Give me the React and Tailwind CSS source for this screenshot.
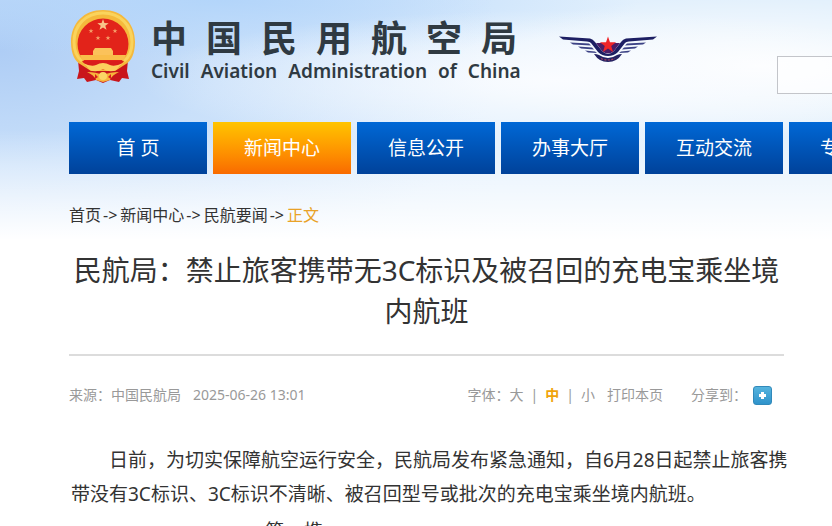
import React, { useState } from 'react'

const navItems = ['首 页', '新闻中心', '信息公开', '办事大厅', '互动交流', '专题专栏'];
const crumbs = ['首页', '新闻中心', '民航要闻'];
const sizes = ['大', '中', '小'];

const Star = ({ cx, cy, r, fill }) => {
    const points = Array.from({ length: 10 }, (_, i) => {
        const radius = i % 2 ? r * 0.4 : r;
        const angle = (Math.PI / 5) * i - Math.PI / 2;
        return `${cx + radius * Math.cos(angle)},${cy + radius * Math.sin(angle)}`;
    }).join(' ');
    return <polygon points={points} fill={fill} />;
};

const Emblem = () => (
    <svg className="w-[68px] h-[74px] shrink-0" viewBox="0 0 68 74" aria-hidden="true">
        <path d="M9 50 L22 54 H46 L59 50 L58 61 L60 69 L53 68 L50 72 L41 70 L34 73 L27 70 L18 72 L15 68 L8 69 L10 61 Z" fill="#c9151b" />
        <path d="M34 0 C53 0 66 13 66 32 C66 44 62 51 57 54 L46 61 H22 L11 54 C6 51 2 44 2 32 C2 13 15 0 34 0 Z" fill="#f5b93c" />
        <path d="M34 3 C51 3 63 15 63 32 C63 42 59 48 55 51" fill="none" stroke="#fad35c" strokeWidth="3" />
        <path d="M34 3 C17 3 5 15 5 32 C5 42 9 48 13 51" fill="none" stroke="#fad35c" strokeWidth="3" />
        <circle cx="34" cy="34" r="25.5" fill="#e2231a" />
        <Star cx={34} cy={15} r={6} fill="#f8c68a" />
        <Star cx={22} cy={21} r={2.6} fill="#f6a06a" />
        <Star cx={46} cy={21} r={2.6} fill="#f6a06a" />
        <Star cx={29} cy={28} r={2.6} fill="#f6a06a" />
        <Star cx={39} cy={28} r={2.6} fill="#f6a06a" />
        <path d="M26 38 H42 L44 41 V43 H24 V41 Z M24 43 H44 V46 H24 Z" fill="#fbc25a" />
        <path d="M11 45 H57 L55 50 H13 Z" fill="#f9bd4a" />
        <path d="M13 51 H55 L50 57 Q44 60 40 57 L34 54 L28 57 Q24 60 18 57 Z" fill="#d91d1c" />
        <path d="M14 53 Q22 57 27 55 Q34 51 41 55 Q46 57 54 53 L47 60 Q41 63 34 59 Q27 63 21 60 Z" fill="#fbcf5d" />
        <path d="M18 62 Q27 62 34 65 Q41 62 50 62 Q43 65 41 70 L34 72 L27 70 Q25 65 18 62 Z" fill="#f7b53c" />
        <circle cx="34" cy="66" r="4" fill="#fbd766" />
        <path d="M26 64 L29 67 L26 69 Z M42 64 L39 67 L42 69 Z" fill="#d91d1c" />
    </svg>
);

const Wings = () => (
    <svg className="w-[98px] h-[27px] shrink-0" viewBox="0 0 98 27" aria-hidden="true">
        <g id="wing" fill="#1d1f63">
            <path d="M0 0.5 L31 2.5 Q34 3 36 6 L43 15 Q46 18 49 18 V20 Q43 20 39 16 L32 7 Q31 5.5 28 5.5 L4 3.5 Z" />
            <path d="M11 6.5 L30 7.5 L32 9.5 L14 8.5 Z" fill="#3c4285" />
            <path d="M19 10.5 L33 11.5 L35 13.5 L22 12.5 Z" fill="#3c4285" />
            <path d="M26 14.5 L36 15.5 L38 17 L29 16.5 Z" fill="#3c4285" />
        </g>
        <use href="#wing" transform="translate(98 0) scale(-1 1)" />
        <path d="M37 7 H61 L55 15 Q49 20 43 15 Z" fill="#4a1d66" />
        <Star cx={49} cy={9} r={8.5} fill="#ee2428" />
        <path d="M35 18 Q38 18 40 19 Q49 25 58 19 Q60 18 63 18 Q58 26 49 26 Q40 26 35 18 Z" fill="#252363" />
        <path d="M42 22.5 Q49 25.5 56 22.5" fill="none" stroke="#a8415f" strokeWidth="1.2" strokeDasharray="2 1.5" />
    </svg>
);

const Header = () => (
    <header className="flex items-start pt-[10px] pl-[69px]">
        <Emblem />
        <div className="ml-[14px] pt-2 text-[#2f3a42] shrink-0">
            <h2 className="flex gap-[19px] text-[36px] leading-[42px] font-bold">
                {[...'中国民用航空局'].map(c => <span key={c}>{c}</span>)}
            </h2>
            <p className="flex gap-[11px] text-[19px] leading-[22px] font-semibold font-['Noto_Sans',sans-serif]">
                {['Civil', 'Aviation', 'Administration', 'of', 'China'].map(w => <span key={w}>{w}</span>)}
            </p>
        </div>
        <div className="ml-[38px] pt-[26px] shrink-0">
            <Wings />
        </div>
        <input
            type="text"
            aria-label="搜索"
            className="ml-auto mt-[46px] -mr-2 w-[63px] h-[38px] shrink-0 border border-[#c3c5ca] bg-white/60"
        />
    </header>
);

const Nav = () => (
    <nav className="mt-7 pl-[69px] flex gap-[6px]">
        {navItems.map((item, i) => (
            <a
                key={item}
                href="#"
                className={`w-[138px] h-[52px] shrink-0 flex items-center justify-center text-[19px] text-white bg-linear-to-b ${i === 1 ? 'from-[#ffc400] to-[#f96a00]' : 'from-[#0068d6] to-[#00429a]'}`}
            >
                {item}
            </a>
        ))}
    </nav>
);

const Article = () => {
    const [size, setSize] = useState('中');

    return (
        <main className="pl-[69px] pr-12 text-[#333]">
            <div className="pt-[29px] text-[16px] leading-[24px]">
                {crumbs.map(c => (
                    <React.Fragment key={c}>
                        <a href="#">{c}</a>
                        <span className="ml-[2px] mr-[3px]">-&gt;</span>
                    </React.Fragment>
                ))}
                <span className="text-[#e9a227]">正文</span>
            </div>
            <h1 className="mt-[23px] pb-[22px] border-b-2 border-[#dcdcdc] text-center text-[28px] leading-[41px]">
                民航局：禁止旅客携带无3C标识及被召回的充电宝乘坐境内航班
            </h1>
            <div className="mt-[27px] flex items-center justify-between text-[14px] leading-[24px] text-[#999]">
                <div className="flex gap-3">
                    <span>来源：中国民航局</span>
                    <span>2025-06-26 13:01</span>
                </div>
                <div className="flex items-center pr-3">
                    <span>字体：</span>
                    {sizes.map((s, i) => (
                        <React.Fragment key={s}>
                            {i > 0 && <span className="mx-[7px]">|</span>}
                            <button
                                onClick={() => setSize(s)}
                                className={s === size ? 'font-bold text-[#f0a30a]' : ''}
                            >
                                {s}
                            </button>
                        </React.Fragment>
                    ))}
                    <button className="ml-3">打印本页</button>
                    <span className="ml-7">分享到：</span>
                    <button
                        aria-label="分享"
                        className="ml-[6px] w-[19px] h-[19px] flex items-center justify-center rounded-[3px] border border-[#3189ba] bg-linear-to-b from-[#55b4de] to-[#2f93cb]"
                    >
                        <svg className="w-[9px] h-[9px]" viewBox="0 0 9 9">
                            <path d="M3 1 H6 V3 H8 V6 H6 V8 H3 V6 H1 V3 H3 Z" fill="#fff" />
                        </svg>
                    </button>
                </div>
            </div>
            <div className="mt-[36px] ml-[2px] -mr-2 text-[19px] leading-[34px]">
                <p className="indent-[2em]">
                    日前，为切实保障航空运行安全，民航局发布紧急通知，自6月28日起禁止旅客携带没有3C标识、3C标识不清晰、被召回型号或批次的充电宝乘坐境内航班。
                </p>
                <p className="mt-[3px] pl-[194px] flex gap-5">
                    <span>第</span>
                    <span>携</span>
                </p>
            </div>
        </main>
    );
};

const App = () => (
    <div
        lang="zh-CN"
        className="h-screen overflow-hidden bg-white bg-[linear-gradient(to_bottom,transparent_0,transparent_130px,white_240px),radial-gradient(ellipse_420px_70px_at_560px_80px,#fafcff_0,transparent_100%),radial-gradient(ellipse_420px_60px_at_220px_0,#b3d5fa_0,transparent_100%),radial-gradient(ellipse_500px_260px_at_0_50px,#aecdf5_0,#c9e0fa_45%,transparent_100%),radial-gradient(ellipse_320px_70px_at_760px_66px,#ffffff_0,transparent_100%),linear-gradient(to_right,#dbeafc_0,#e2f0fd_60%,#e2f0fc_100%)] font-['Noto_Sans','Noto_Sans_CJK_SC',sans-serif]"
    >
        <Header />
        <Nav />
        <Article />
    </div>
);

export default App;
